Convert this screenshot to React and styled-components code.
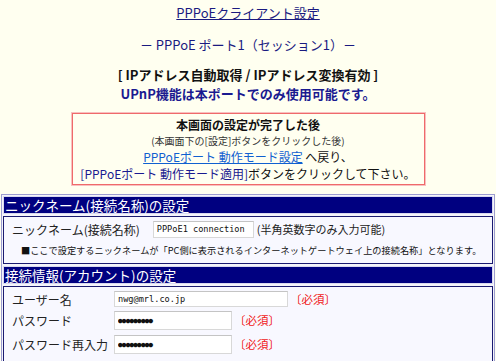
import React from 'react';
import styled, { createGlobalStyle } from 'styled-components';

const GlobalStyle = createGlobalStyle`
    html, body {
        margin: 0;
        padding: 0;
        background: #fffff0;
    }
    body {
        font-family: "Noto Sans CJK JP", "Liberation Sans", sans-serif;
        font-size: 13px;
        color: #000;
    }
`;

const Page = styled.div`
    width: 496px;
    height: 361px;
    overflow: hidden;
    padding-top: 4px;
    box-sizing: border-box;
`;

const Title = styled.div`
    text-align: center;
    font-size: 13px;
    line-height: 18px;
    color: #1a1a80;
    text-decoration: underline;
`;

const SubTitle = styled.div`
    text-align: center;
    font-size: 13px;
    line-height: 18px;
    color: #1a1a80;
    margin-top: 14px;
`;

const Mode = styled.div`
    text-align: center;
    font-size: 13px;
    line-height: 18px;
    font-weight: bold;
    color: ${p => p.$navy ? '#1a1a90' : '#111'};
    margin-top: ${p => p.$top || 0}px;
`;

const Notice = styled.div`
    box-sizing: border-box;
    width: 353px;
    height: 72px;
    margin: 10px auto 0;
    border: 1px solid #ef6a6a;
    box-shadow: 0 0 0 1px #f8c0c0;
    text-align: center;
    padding-top: 2px;
`;

const NoticeLine = styled.div`
    font-size: ${p => p.$small ? 10 : 12}px;
    line-height: ${p => p.$small ? 15 : 17}px;
    font-weight: ${p => p.$bold ? 'bold' : 'normal'};
    color: ${p => p.$small ? '#333' : '#111'};
    white-space: nowrap;
`;

const Link = styled.a`
    color: #1060d0;
    text-decoration: underline;
`;

const Navy = styled.span`
    color: #1a1a90;
`;

const Table = styled.div`
    margin: 9px 1px 0;
    border: 1px solid #9c9cd0;
    background: #f4f4fa;
    padding: 1px;
    display: flex;
    flex-direction: column;
    gap: 2px;
`;

const Header = styled.div`
    box-sizing: border-box;
    height: 18px;
    background: #000080;
    border: 1px solid #d8d8f0;
    color: #fff;
    font-size: 13.5px;
    line-height: 16px;
    padding: 0 1px;
    white-space: nowrap;
`;

const Cell = styled.div`
    box-sizing: border-box;
    height: ${p => p.$h}px;
    background: #f8f8ff;
    border: 1px solid #1a1a70;
    padding: ${p => p.$pad};
`;

const Row = styled.div`
    display: flex;
    align-items: center;
    height: ${p => p.$h || 20}px;
    white-space: nowrap;
`;

const Label = styled.span`
    font-size: 12px;
    color: #222;
    width: ${p => p.$w ? p.$w + 'px' : 'auto'};
    flex-shrink: 0;
`;

const Input = styled.input`
    box-sizing: border-box;
    width: ${p => p.$w}px;
    height: ${p => p.$h || 17}px;
    border: 1px solid #d8d8d8;
    border-top-color: #c4c4c4;
    background: #fff;
    font-family: "DejaVu Sans Mono", monospace;
    font-size: ${p => p.$dots ? 7.5 : 8.6}px;
    letter-spacing: ${p => p.$dots ? '-0.7px' : '0'};
    color: #111;
    padding: 0 3px;
    margin: ${p => p.$m || '0'};
    outline: none;
    flex-shrink: 0;
`;

const Hint = styled.span`
    font-size: 11px;
    color: #222;
    margin-left: 3px;
`;

const Note = styled.div`
    font-size: 9.2px;
    line-height: 14px;
    color: #111;
    margin: 5px 0 0 9px;
    white-space: nowrap;
`;

const Required = styled.span`
    color: #f01818;
    font-size: 11.5px;
    margin-left: 2px;
`;

const App = () => {
    return (
        <>
            <GlobalStyle />
            <Page>
                <Title>PPPoEクライアント設定</Title>
                <SubTitle>－ PPPoE ポート1（セッション1）－</SubTitle>
                <Mode $top={12}>[ IPアドレス自動取得 / IPアドレス変換有効 ]</Mode>
                <Mode $navy $top={1}>UPnP機能は本ポートでのみ使用可能です。</Mode>
                <Notice>
                    <NoticeLine $bold>本画面の設定が完了した後</NoticeLine>
                    <NoticeLine $small>(本画面下の[設定]ボタンをクリックした後)</NoticeLine>
                    <NoticeLine><Link href="#">PPPoEポート 動作モード設定</Link> へ戻り、</NoticeLine>
                    <NoticeLine><Navy>[PPPoEポート 動作モード適用]</Navy>ボタンをクリックして下さい。</NoticeLine>
                </Notice>
                <Table>
                    <Header>ニックネーム(接続名称)の設定</Header>
                    <Cell $h={48} $pad="3px 0 0 8px">
                        <Row $h={18}>
                            <Label>ニックネーム(接続名称)</Label>
                            <Input $w={101} $m="0 0 0 13px" readOnly value="PPPoE1 connection" />
                            <Hint>(半角英数字のみ入力可能)</Hint>
                        </Row>
                        <Note>■ここで設定するニックネームが「PC側に表示されるインターネットゲートウェイ上の接続名称」となります。</Note>
                    </Cell>
                    <Header>接続情報(アカウント)の設定</Header>
                    <Cell $h={76} $pad="3px 0 0 8px">
                        <Row $h={18}>
                            <Label $w={102}>ユーザー名</Label>
                            <Input $w={174} $h={16} readOnly value="nwg@mrl.co.jp" />
                            <Required>〔必須〕</Required>
                        </Row>
                        <Row $h={24}>
                            <Label $w={102}>パスワード</Label>
                            <Input $w={118} $h={19} $dots readOnly value="●●●●●●●●●" />
                            <Required>〔必須〕</Required>
                        </Row>
                        <Row $h={24}>
                            <Label $w={102}>パスワード再入力</Label>
                            <Input $w={118} $h={19} $dots readOnly value="●●●●●●●●●" />
                            <Required>〔必須〕</Required>
                        </Row>
                    </Cell>
                </Table>
            </Page>
        </>
    );
};

export default App;
